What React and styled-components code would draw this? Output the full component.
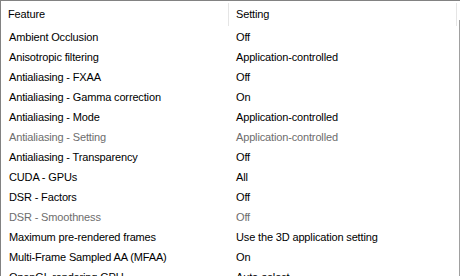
import React from 'react';
import styled, { createGlobalStyle } from 'styled-components';

const GlobalStyle = createGlobalStyle`
  html, body {
    margin: 0;
    padding: 0;
    background: #fff;
  }
  body {
    font-family: "Liberation Sans", Arial, sans-serif;
    font-size: 11px;
    letter-spacing: -0.15px;
    color: #000;
  }
`;

const ListView = styled.div`
  width: 460px;
  height: 276px;
  box-sizing: border-box;
  border-top: 1px solid #828282;
  border-left: 1px solid #828282;
  overflow: hidden;
  position: relative;
  background: #fff;
`;

const RightEdge = styled.div`
  position: absolute;
  right: 0;
  top: 19px;
  bottom: 0;
  width: 1px;
  background: #a0a0a0;
`;

const Grid = styled.div`
  display: grid;
  grid-template-columns: 228px 228px;
`;

const HeaderCell = styled.div`
  height: 26px;
  display: flex;
  align-items: center;
  padding-left: ${(p) => p.$pad}px;
  position: relative;
  &::after {
    content: '';
    position: absolute;
    right: 0;
    top: 2px;
    bottom: 1px;
    width: 1px;
    background: #e5e5e5;
  }
`;

const Cell = styled.div`
  height: 20px;
  display: flex;
  align-items: center;
  padding-left: ${(p) => p.$pad}px;
  white-space: nowrap;
  color: ${(p) => (p.$disabled ? '#6d6d6d' : '#000')};
`;

const rows = [
  ['Ambient Occlusion', 'Off'],
  ['Anisotropic filtering', 'Application-controlled'],
  ['Antialiasing - FXAA', 'Off'],
  ['Antialiasing - Gamma correction', 'On'],
  ['Antialiasing - Mode', 'Application-controlled'],
  ['Antialiasing - Setting', 'Application-controlled', true],
  ['Antialiasing - Transparency', 'Off'],
  ['CUDA - GPUs', 'All'],
  ['DSR - Factors', 'Off'],
  ['DSR - Smoothness', 'Off', true],
  ['Maximum pre-rendered frames', 'Use the 3D application setting'],
  ['Multi-Frame Sampled AA (MFAA)', 'On'],
  ['OpenGL rendering GPU', 'Auto-select'],
];

const App = () => (
  <>
    <GlobalStyle />
    <ListView>
      <Grid>
        <HeaderCell $pad={7}>Feature</HeaderCell>
        <HeaderCell $pad={7}>Setting</HeaderCell>
        {rows.map(([feature, setting, disabled]) => (
          <React.Fragment key={feature}>
            <Cell $pad={8} $disabled={disabled}>{feature}</Cell>
            <Cell $pad={7} $disabled={disabled}>{setting}</Cell>
          </React.Fragment>
        ))}
      </Grid>
      <RightEdge />
    </ListView>
  </>
);

export default App;
